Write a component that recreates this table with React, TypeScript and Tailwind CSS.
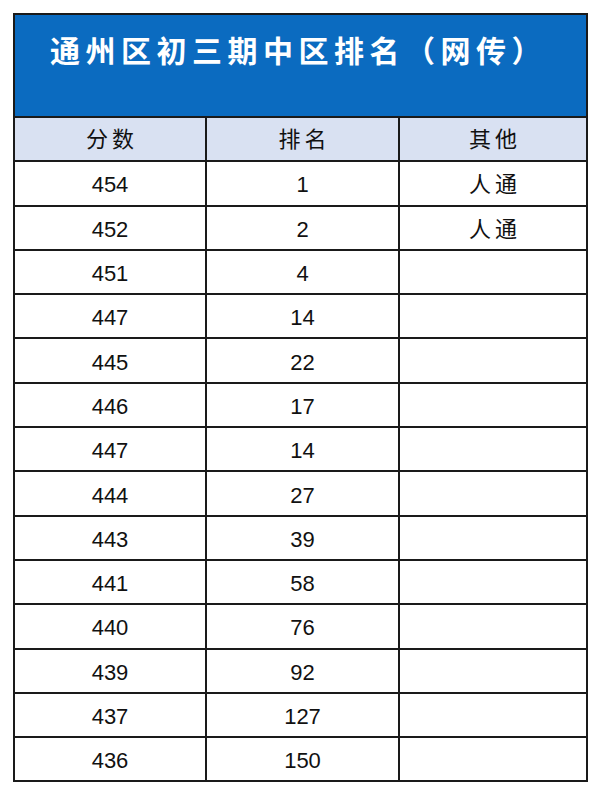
import React from "react";

const rows: [string, string, string][] = [
  ["454", "1", "人通"],
  ["452", "2", "人通"],
  ["451", "4", ""],
  ["447", "14", ""],
  ["445", "22", ""],
  ["446", "17", ""],
  ["447", "14", ""],
  ["444", "27", ""],
  ["443", "39", ""],
  ["441", "58", ""],
  ["440", "76", ""],
  ["439", "92", ""],
  ["437", "127", ""],
  ["436", "150", ""],
];

const font = { fontFamily: '"Liberation Sans", "Noto Sans CJK SC", sans-serif' };

export default function App() {
  return (
    <div className="w-[600px] h-[796px] bg-white pt-[13px] pl-[13px]" style={font}>
      <div className="w-[575px] border-2 border-[#1a1a1a]">
        <div className="h-[101px] bg-[#0b6bc0] pl-[35px] pt-[14px]">
          <div
            className="text-white text-[30px] leading-[40px] font-semibold tracking-[5.5px]"
            style={{ fontFamily: '"Noto Sans CJK SC", sans-serif' }}
          >
            通州区初三期中区排名（网传）
          </div>
        </div>
        <div className="grid grid-cols-[192px_193px_1fr] h-[44.3px] border-t-2 border-[#1a1a1a] bg-[#d9e1f2] text-[22px] text-[#111]">
          <div className="flex items-center justify-center border-r-2 border-[#1a1a1a] tracking-[4px] pl-[4px]">分数</div>
          <div className="flex items-center justify-center border-r-2 border-[#1a1a1a] tracking-[4px] pl-[4px]">排名</div>
          <div className="flex items-center justify-center tracking-[4px] pl-[4px]">其他</div>
        </div>
        {rows.map((r, i) => (
          <div
            key={i}
            className="grid grid-cols-[192px_193px_1fr] h-[44.3px] border-t-2 border-[#1a1a1a] text-[22px] text-[#111]"
          >
            <div className="flex items-center justify-center border-r-2 border-[#1a1a1a] pt-[3px]">{r[0]}</div>
            <div className="flex items-center justify-center border-r-2 border-[#1a1a1a] pt-[3px]">{r[1]}</div>
            <div className="flex items-center justify-center tracking-[4px] pl-[4px] pt-[3px]">{r[2]}</div>
          </div>
        ))}
      </div>
    </div>
  );
}
